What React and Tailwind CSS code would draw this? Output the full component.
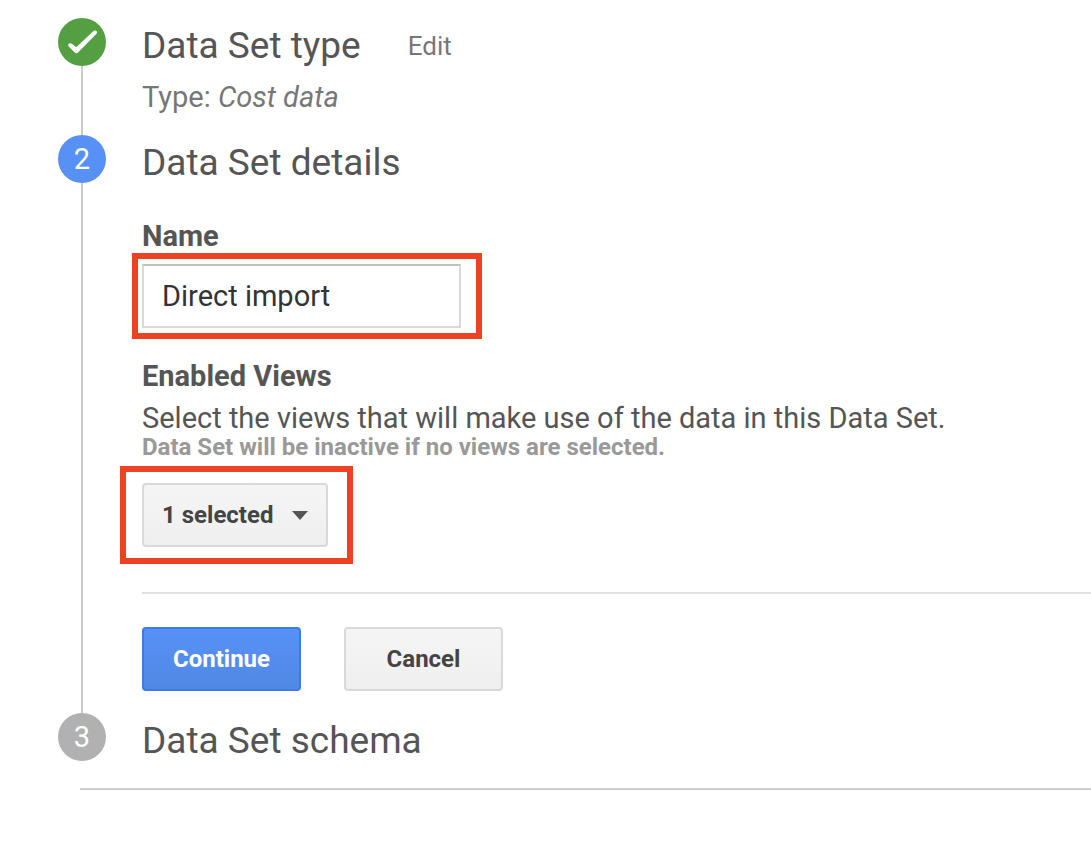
import React from 'react';

const markerColors = {
  done: 'bg-[#559f43]',
  current: 'bg-[#5791f6]',
  upcoming: 'bg-[#b1b1b1]',
};

function Step({ state, marker, title, action, last, children }) {
  return (
    <li className="flex gap-9">
      <div className="flex w-12 shrink-0 flex-col items-center">
        <span
          className={`flex size-12 shrink-0 items-center justify-center rounded-full text-[29px] leading-8 text-white ${markerColors[state]}`}
        >
          {marker}
        </span>
        {!last && <span className="w-0.5 grow bg-[#cbcbcb]" />}
      </div>
      <div className="min-w-0 grow">
        <div className="flex items-center gap-[47px]">
          <h2 className="text-[37px] leading-[55px] text-[#555]">{title}</h2>
          {action}
        </div>
        {children}
      </div>
    </li>
  );
}

function CheckMark() {
  return (
    <svg viewBox="0 0 48 48" className="size-12" role="img" aria-label="Completed">
      <path
        d="M10.2 28 Q9.8 26.4 11.2 25.6 Q12.6 24.8 13.8 25.8 L18.3 29.3 L35.2 13.2 Q36.6 12.2 38.2 12.8 Q39.8 13.8 38.8 15.4 L20 34.4 Q18.3 36.2 16.8 34.6 Z"
        fill="#fff"
      />
    </svg>
  );
}

export default function App() {
  return (
    <main className="pt-[18px] pl-[58px] font-[Roboto,sans-serif]">
      <ol>
        <Step
          state="done"
          marker={<CheckMark />}
          title="Data Set type"
          action={
            <a href="#edit" className="text-[26px] leading-8 text-[#777]">
              Edit
            </a>
          }
        >
          <p className="pt-1.5 pb-5 text-[29px] leading-9 text-[#777]">
            Type: <em>Cost data</em>
          </p>
        </Step>

        <Step state="current" marker="2" title="Data Set details">
          <form onSubmit={(e) => e.preventDefault()}>
            <label
              htmlFor="name"
              className="mt-[30px] block text-[29px] leading-8 font-bold text-[#555]"
            >
              Name
            </label>
            <div className="mt-px -ml-[10px] w-fit border-6 border-[#ee4023] py-[5px] pr-[15px] pl-1">
              <input
                id="name"
                type="text"
                defaultValue="Direct import"
                className="block h-16 w-[319px] border-2 border-[#d9d9d9] border-t-[#c0c0c0] bg-white px-[18px] text-[29px] text-[#333] outline-none"
              />
            </div>

            <label
              htmlFor="views"
              className="mt-[21px] block text-[29px] leading-8 font-bold text-[#555]"
            >
              Enabled Views
            </label>
            <p className="mt-2 text-[29px] leading-9 text-[#555]">
              Select the views that will make use of the data in this Data Set.
            </p>
            <p className="text-2xl leading-[22px] font-bold text-[#999]">
              Data Set will be inactive if no views are selected.
            </p>
            <div className="mt-2 -ml-[22px] w-fit border-6 border-[#ee4023] py-[11px] pr-[19px] pl-4">
              <div className="relative">
                <select
                  id="views"
                  className="block h-16 w-[186px] appearance-none rounded border-2 border-[#d9d9d9] bg-linear-to-b from-[#f5f5f5] to-[#efefef] pl-[18px] text-2xl font-bold text-[#444] outline-none"
                >
                  <option>1 selected</option>
                </select>
                <svg
                  viewBox="0 0 16 9"
                  className="pointer-events-none absolute top-7 right-5 h-[9px] w-4"
                  aria-hidden="true"
                >
                  <path d="M0 0 H16 L8 9 Z" fill="#555" />
                </svg>
              </div>
            </div>

            <hr className="mt-7 border-t-2 border-[#e2e2e2]" />
            <div className="flex gap-[43px] pt-[33px] pb-[22px]">
              <button
                type="submit"
                className="h-16 w-[159px] rounded border-2 border-[#3d7be6] bg-linear-to-b from-[#5891f7] to-[#5088e4] text-2xl font-bold text-white"
              >
                Continue
              </button>
              <button
                type="button"
                className="h-16 w-[159px] rounded border-2 border-[#d9d9d9] bg-linear-to-b from-[#f5f5f5] to-[#efefef] text-2xl font-bold text-[#444]"
              >
                Cancel
              </button>
            </div>
          </form>
        </Step>

        <Step state="upcoming" marker="3" title="Data Set schema" last />
      </ol>
      <hr className="mt-5 ml-[22px] border-t-2 border-[#cecece]" />
    </main>
  );
}
